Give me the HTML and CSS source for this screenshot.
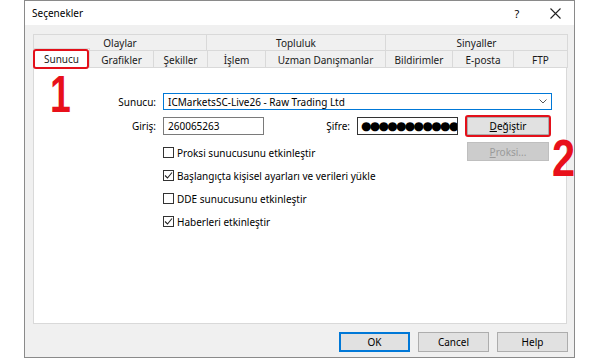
FILE: index.html
```html
<!DOCTYPE html>
<html lang="tr">

<head>
    <meta charset="UTF-8">
    <meta name="viewport" content="width=device-width, initial-scale=1.0">
    <title>Seçenekler</title>
    <link rel="stylesheet" href="styles.css">
</head>

<body>

    <div class="dialog">

        <div class="titlebar">
            <span class="title">Seçenekler</span>
            <span class="title-btn">?</span>
            <span class="title-btn">
                <svg width="11" height="11" viewBox="0 0 11 11">
                    <path d="M0.5 0.5 L10.5 10.5 M10.5 0.5 L0.5 10.5" stroke="#222" stroke-width="1.1" fill="none"/>
                </svg>
            </span>
        </div>

        <div class="dialog-body">

            <!-- Pestañas -->
            <div class="tabs">
                <div class="tab-row back-row">
                    <div class="tab">Olaylar</div>
                    <div class="tab">Topluluk</div>
                    <div class="tab">Sinyaller</div>
                </div>
                <div class="tab-row front-row">
                    <div class="tab tab-active">Sunucu</div>
                    <div class="tab">Grafikler</div>
                    <div class="tab">Şekiller</div>
                    <div class="tab">İşlem</div>
                    <div class="tab">Uzman Danışmanlar</div>
                    <div class="tab">Bildirimler</div>
                    <div class="tab">E-posta</div>
                    <div class="tab">FTP</div>
                </div>
            </div>

            <div class="panel">
                <span class="step step-one">1</span>
                <span class="step step-two">2</span>

                <div class="field-row server-row">
                    <span class="field-label">Sunucu:</span>
                    <div class="combo">
                        <span>ICMarketsSC-Live26 - Raw Trading Ltd</span>
                        <svg class="combo-arrow" width="8" height="5" viewBox="0 0 8 5">
                            <path d="M0.5 0.5 L4 4 L7.5 0.5" stroke="#555" stroke-width="1" fill="none"/>
                        </svg>
                    </div>
                </div>

                <div class="field-row login-row">
                    <span class="field-label">Giriş:</span>
                    <div class="text-input login-input">260065263</div>
                    <span class="field-label password-label">Şifre:</span>
                    <div class="text-input password-input">●●●●●●●●●●●</div>
                    <button class="push-btn marked"><u>D</u>eğiştir</button>
                </div>

                <div class="options">
                    <ul class="check-list">
                        <li><span class="check-box"></span>Proksi sunucusunu etkinleştir</li>
                        <li><span class="check-box checked"><svg width="9" height="9" viewBox="0 0 9 9"><path d="M1 4.5 L3.5 7 L8 1.5" stroke="#222" stroke-width="1.1" fill="none"/></svg></span>Başlangıçta kişisel ayarları ve verileri yükle</li>
                        <li><span class="check-box"></span>DDE sunucusunu etkinleştir</li>
                        <li><span class="check-box checked"><svg width="9" height="9" viewBox="0 0 9 9"><path d="M1 4.5 L3.5 7 L8 1.5" stroke="#222" stroke-width="1.1" fill="none"/></svg></span>Haberleri etkinleştir</li>
                    </ul>
                    <button class="push-btn" disabled><u>P</u>roksi...</button>
                </div>
            </div>

            <div class="footer">
                <button class="dlg-btn default-btn">OK</button>
                <button class="dlg-btn">Cancel</button>
                <button class="dlg-btn">Help</button>
            </div>

        </div>
    </div>

</body>

</html>
```

FILE: styles.css
```css
* {
    box-sizing: border-box;
}

body {
    margin: 0;
    background-color: #fff;
    font-family: "Noto Sans", "Open Sans", sans-serif;
    font-size: 10px;
    color: #000;
}

.dialog {
    width: 551px;
    height: 358px;
    margin-left: 24px;
    border: 1px solid #8a8a8a;
    background-color: #f0f0f0;
    display: flex;
    flex-direction: column;
}

.titlebar {
    height: 24px;
    background-color: #fff;
    display: flex;
    align-items: center;
    padding-left: 7px;
}

.title {
    font-size: 10px;
    flex: 1;
}

.title-btn {
    width: 38px;
    display: flex;
    justify-content: center;
    align-items: center;
    font-size: 11px;
}

.dialog-body {
    flex: 1;
    padding: 9px 6px 5px 8px;
    display: flex;
    flex-direction: column;
}

/* tabs */
.tabs {
    width: 534px;
}

.tab-row {
    display: grid;
    border-left: 1px solid #d9d9d9;
}

.back-row {
    height: 16px;
    grid-template-columns: 173px 179px 182px;
}

.front-row {
    height: 17px;
    grid-template-columns: 56px 64px 54px 58px 120px 67px 61px 54px;
}

.tab {
    border-top: 1px solid #d9d9d9;
    border-right: 1px solid #d9d9d9;
    background-color: #f0f0f0;
    display: flex;
    align-items: center;
    justify-content: center;
    color: #1a1a1a;
}

.tab-active {
    position: relative;
    z-index: 2;
    margin-top: -2px;
    height: 20px;
    background-color: #fff;
    border-left: 1px solid #d9d9d9;
    margin-left: -1px;
}

.tab-active::after {
    content: "";
    position: absolute;
    left: -1px;
    right: 0;
    top: 0;
    bottom: -1px;
    border: 2px solid #e3101a;
    border-radius: 3px;
}

/* panel */
.panel {
    position: relative;
    width: 534px;
    height: 257px;
    background-color: #fff;
    border: 1px solid #d9d9d9;
    padding-top: 25px;
}

.step {
    position: absolute;
    z-index: 3;
    font-family: "Liberation Sans", sans-serif;
    font-weight: bold;
    font-size: 52px;
    line-height: 1;
    color: #e8101a;
    transform-origin: left top;
}

.step-one {
    left: 16px;
    top: 0;
    transform: scaleX(0.72);
}

.step-two {
    left: 518px;
    top: 64px;
    transform: scaleX(0.8);
}

.field-row {
    display: flex;
    align-items: center;
}

.field-label {
    width: 122px;
    margin-right: 7px;
    text-align: right;
}

.combo {
    width: 389px;
    height: 17px;
    border: 1px solid #0078d7;
    padding: 0 4px 0 4px;
    display: flex;
    align-items: center;
    justify-content: space-between;
}

.login-row {
    margin-top: 7px;
}

.text-input {
    width: 101px;
    height: 18px;
    border: 1px solid #7a7a7a;
    padding-left: 4px;
    display: flex;
    align-items: center;
    overflow: hidden;
    white-space: nowrap;
}

.password-label {
    width: 86px;
}

.password-input {
    border-color: #333;
    padding-left: 3px;
    font-family: "DejaVu Sans", sans-serif;
    font-size: 12px;
    letter-spacing: -1.7px;
}

.push-btn {
    position: relative;
    width: 82px;
    height: 18px;
    margin-left: 9px;
    padding: 0;
    font-family: inherit;
    font-size: 10px;
    background-color: #e1e1e1;
    border: 1px solid #adadad;
    color: #000;
}

.push-btn.marked::after {
    content: "";
    position: absolute;
    left: -3px;
    right: -3px;
    top: -3px;
    bottom: -3px;
    border: 2px solid #e3101a;
    border-radius: 3px;
}

.push-btn:disabled {
    background-color: #cccccc;
    border-color: #bfbfbf;
    color: #9a9a9a;
    height: 19px;
    margin-left: 0;
    margin-top: 1px;
}

.options {
    margin-top: 6px;
    padding-left: 129px;
    display: flex;
    align-items: flex-start;
}

.check-list {
    list-style-type: none;
    margin: 0;
    padding: 0;
    width: 304px;
}

.check-list li {
    height: 23px;
    display: flex;
    align-items: center;
}

.check-box {
    width: 11px;
    height: 11px;
    border: 1px solid #333;
    background-color: #fff;
    margin-right: 3px;
    display: flex;
    align-items: center;
    justify-content: center;
}

/* footer buttons */
.footer {
    margin-top: 8px;
    display: flex;
    justify-content: flex-end;
    gap: 8px;
}

.dlg-btn {
    width: 71px;
    height: 20px;
    font-family: inherit;
    font-size: 10px;
    background-color: #e1e1e1;
    border: 1px solid #adadad;
    color: #000;
    padding: 0;
}

.default-btn {
    border-color: #0078d7;
    box-shadow: inset 0 0 0 1px #0078d7;
}
```
